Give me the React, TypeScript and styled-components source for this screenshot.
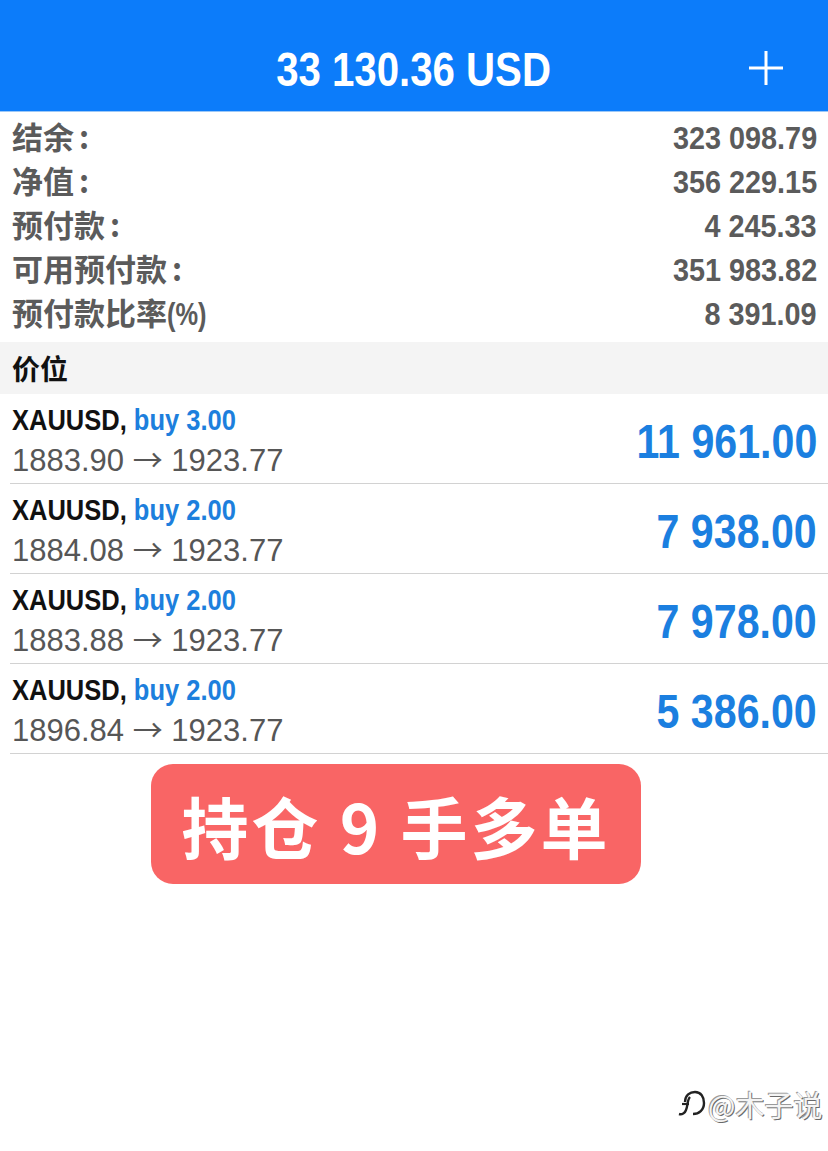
import React from 'react';
import styled, { createGlobalStyle } from 'styled-components';

const SANS = '"Liberation Sans", Arial, sans-serif';
const CJK = '"Noto Sans CJK SC", "Noto Sans", sans-serif';

const summary = [
    { label: '结余', colon: true, value: '323 098.79' },
    { label: '净值', colon: true, value: '356 229.15' },
    { label: '预付款', colon: true, value: '4 245.33' },
    { label: '可用预付款', colon: true, value: '351 983.82' },
    { label: '预付款比率', suffix: '(%)', value: '8 391.09' },
];

const positions = [
    { lot: '3.00', open: '1883.90', now: '1923.77', profit: '11 961.00' },
    { lot: '2.00', open: '1884.08', now: '1923.77', profit: '7 938.00' },
    { lot: '2.00', open: '1883.88', now: '1923.77', profit: '7 978.00' },
    { lot: '2.00', open: '1896.84', now: '1923.77', profit: '5 386.00' },
];

const App: React.FC = () => {
    return (
        <Page>
            <GlobalStyle />
            <Header>
                <Title>
                    <Squeeze $scale={0.82} $origin='center'>33 130.36 USD</Squeeze>
                </Title>
                <PlusButton>
                    <svg width='38' height='38' viewBox='0 0 38 38'>
                        <path d='M19 2 V36 M2 19 H36' stroke='#fff' strokeWidth='3' fill='none' />
                    </svg>
                </PlusButton>
            </Header>
            <Summary>
                {summary.map((row) => (
                    <SummaryRow key={row.label}>
                        <Label>
                            {row.label}
                            {row.colon && <Colon>:</Colon>}
                            {row.suffix && <Squeeze $scale={0.82} $origin='left'><Suffix>{row.suffix}</Suffix></Squeeze>}
                        </Label>
                        <Amount>
                            <Squeeze $scale={0.9} $origin='right'>{row.value}</Squeeze>
                        </Amount>
                    </SummaryRow>
                ))}
            </Summary>
            <SectionHeader>价位</SectionHeader>
            <PositionList>
                {positions.map((p, i) => (
                    <PositionRow key={i}>
                        <PositionInfo>
                            <SymbolLine>
                                <Squeeze $scale={0.85} $origin='left'>
                                    XAUUSD, <Side>buy {p.lot}</Side>
                                </Squeeze>
                            </SymbolLine>
                            <PriceLine>
                                {p.open} <Arrow>→</Arrow> {p.now}
                            </PriceLine>
                        </PositionInfo>
                        <Profit>
                            <Squeeze $scale={0.84} $origin='right'>{p.profit}</Squeeze>
                        </Profit>
                    </PositionRow>
                ))}
            </PositionList>
            <Badge>持仓 9 手多单</Badge>
            <Watermark>
                <svg width='30' height='32' viewBox='0 0 30 32'>
                    <path d='M9 14 C9 7 14 4 19 4 C25 4 28 9 28 15 C28 22 23 26 17 26' stroke='#222' strokeWidth='2.4' fill='none' />
                    <path d='M14 9 C11 12 12 18 10 22 C9 25 6 27 3 26' stroke='#222' strokeWidth='2.4' fill='none' />
                    <path d='M6 16 H13' stroke='#222' strokeWidth='2.2' fill='none' />
                </svg>
                <WatermarkText>@木子说</WatermarkText>
            </Watermark>
        </Page>
    );
};

const GlobalStyle = createGlobalStyle`
    html, body {
        margin: 0;
        padding: 0;
        background: #ffffff;
    }
    * {
        box-sizing: border-box;
    }
`;

const Page = styled.div`
    position: relative;
    width: 828px;
    height: 1151px;
    background: #ffffff;
    overflow: hidden;
`;

const Squeeze = styled.span<{ $scale: number; $origin: string }>`
    display: inline-block;
    white-space: pre;
    transform: scaleX(${({ $scale }) => $scale});
    transform-origin: ${({ $origin }) => $origin};
`;

const Header = styled.div`
    position: relative;
    height: 112px;
    padding-top: 28px;
    background: #0c7cfa;
    border-bottom: 1px solid #9cc8f7;
    display: flex;
    align-items: center;
    justify-content: center;
`;

const Title = styled.div`
    font-family: ${SANS};
    font-weight: 700;
    font-size: 49px;
    color: #ffffff;
    line-height: 1;
`;

const PlusButton = styled.div`
    position: absolute;
    right: 43px;
    top: 49px;
    width: 38px;
    height: 38px;
    display: flex;
`;

const Summary = styled.div`
    padding: 2px 11px 8px 12px;
`;

const SummaryRow = styled.div`
    height: 44px;
    display: flex;
    justify-content: space-between;
    align-items: baseline;
    color: #5b5b5b;
`;

const Label = styled.div`
    font-family: ${CJK};
    font-weight: 700;
    font-size: 31px;
    line-height: 44px;
    display: flex;
    align-items: baseline;
`;

const Colon = styled.span`
    margin-left: 5px;
`;

const Suffix = styled.span`
    font-family: ${SANS};
    font-weight: 700;
    font-size: 31px;
`;

const Amount = styled.div`
    font-family: ${SANS};
    font-weight: 700;
    font-size: 32px;
    line-height: 44px;
`;

const SectionHeader = styled.div`
    height: 52px;
    padding-left: 12px;
    background: #f4f4f4;
    font-family: ${CJK};
    font-weight: 700;
    font-size: 28px;
    line-height: 52px;
    color: #111111;
`;

const PositionList = styled.div`
    padding-left: 10px;
`;

const PositionRow = styled.div`
    height: 90px;
    padding: 8px 11px 0 2px;
    border-bottom: 1.5px solid #d2d2d2;
    display: flex;
    justify-content: space-between;
    align-items: flex-start;
`;

const PositionInfo = styled.div`
    display: flex;
    flex-direction: column;
`;

const SymbolLine = styled.div`
    font-family: ${SANS};
    font-weight: 700;
    font-size: 30px;
    line-height: 36px;
    color: #111111;
`;

const Side = styled.span`
    color: #1d7fdd;
`;

const PriceLine = styled.div`
    font-family: ${SANS};
    font-size: 31px;
    line-height: 40px;
    color: #565656;
`;

const Arrow = styled.span`
    font-family: ${CJK};
    font-size: 30px;
`;

const Profit = styled.div`
    font-family: ${SANS};
    font-weight: 700;
    font-size: 49px;
    line-height: 64px;
    margin-top: 7px;
    color: #1b7fe0;
`;

const Badge = styled.div`
    width: 490px;
    height: 120px;
    margin: 10px 0 0 151px;
    border-radius: 22px;
    background: #f96565;
    display: flex;
    align-items: center;
    justify-content: center;
    font-family: ${CJK};
    font-weight: 700;
    font-size: 67px;
    letter-spacing: 3px;
    color: #ffffff;
`;

const Watermark = styled.div`
    position: absolute;
    left: 676px;
    top: 1083px;
    display: flex;
    align-items: center;
    gap: 2px;
`;

const WatermarkText = styled.span`
    font-family: ${CJK};
    font-size: 29px;
    color: #f4f4f4;
    text-shadow: -1px -1px 0 #9a9a9a, 1px 1px 0 #6a6a6a;
`;

export default App;
